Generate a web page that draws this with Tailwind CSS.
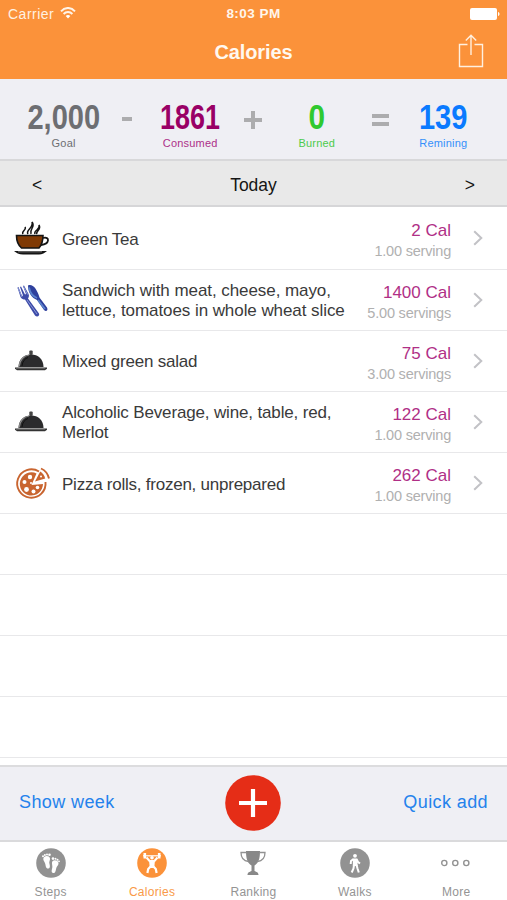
<!DOCTYPE html>
<html lang="en">
<head>
<meta charset="utf-8">
<title>Calories</title>
<script src="https://cdn.jsdelivr.net/npm/@tailwindcss/browser@4"></script>
</head>
<body class="w-[507px] h-[900px] overflow-hidden bg-white font-['Liberation_Sans',Arial,sans-serif] flex flex-col text-[#3a3a3a]">
<svg class="hidden">
  <symbol id="cloche" viewBox="0 0 34 24">
    <path d="M4.500 18C4.500 10 10 5.500 17 5.500S29.500 10 29.500 18Z" fill="#2b2b2d"/>
    <path d="M5.200 17.500C5.500 11 10 6.500 15 6" fill="none" stroke="#8b8b8b" stroke-width="1.200"/>
    <path d="M8 17C8.300 12.500 11 9.500 14 8.500" fill="none" stroke="#111" stroke-width="1"/>
    <rect x="15.300" y="1.500" width="3.400" height="4.500" rx="1" fill="#444"/>
    <path d="M1 18.500h32v1.300l-2 1.400H3l-2-1.400Z" fill="#333"/>
    <path d="M2 19h29" stroke="#999" stroke-width=".8"/>
  </symbol>
  <symbol id="chev" viewBox="0 0 10 16"><path d="M1.200 1.200 8.300 8l-7.100 6.800" fill="none" stroke="#c2c2c6" stroke-width="2"/></symbol>
</svg>

<header class="h-[79px] shrink-0 bg-[#fb923a] text-white flex flex-col">
  <div class="h-7 grid grid-cols-3 items-center px-2 text-[13px] leading-none">
    <div class="flex items-center gap-[6px] text-[#fff1e2]"><span class="text-[14px] tracking-[0.5px]">Carrier</span>
      <svg class="w-4 h-3 -mt-[3px]" viewBox="0 0 16 12" fill="none" stroke="#fff4e8" stroke-width="1.900"><path d="M1 4.300C5-.2 11-.2 15 4.300M3.600 7C6 4.300 10 4.300 12.400 7"/><path d="M8 11.500 5.700 9c1.300-1.300 3.300-1.300 4.600 0Z" fill="#fff" stroke="none"/></svg>
    </div>
    <div class="text-center font-bold text-[13.500px] tracking-[0.450px] text-[#fff6ec]">8:03 PM</div>
    <div class="flex justify-end"><svg class="w-[30px] h-3 -mr-px" viewBox="0 0 30 12" fill="#fff"><rect x="0" y="0" width="27" height="12" rx="2"/><path d="M28 4c2 .5 2 3.500 0 4Z"/></svg></div>
  </div>
  <div class="flex-1 grid grid-cols-3 items-center">
    <div></div>
    <h1 class="text-center text-[20px] font-bold leading-none tracking-[-0.1px] -mt-[3px] text-[#fff8ef]">Calories</h1>
    <div class="flex justify-end pr-[23px]"><svg class="w-[26px] h-9 -mt-[5px]" viewBox="0 0 26 36" fill="none" stroke="#fff0df" stroke-width="1.400"><path d="M9.500 11.500H1.500v22h23v-22h-8M13 22V2.500M7.800 7.500 13 2.200l5.200 5.300"/></svg></div>
  </div>
</header>

<section class="h-[82px] shrink-0 bg-[#efeff4] border-b-2 border-[#d8d8da] flex justify-center">
  <div class="w-[443px] grid grid-cols-7">
    <div class="flex flex-col items-center pt-5 text-[#6d6e72]"><b class="text-[35px] leading-[35px] scale-x-[0.83] whitespace-nowrap">2,000</b><span class="text-[11px] leading-[14px] mt-0.5 tracking-[0.2px]">Goal</span></div>
    <div class="flex justify-center pt-[38px]"><i class="w-[10px] h-1 bg-[#acacae]"></i></div>
    <div class="flex flex-col items-center pt-5 text-[#990066]"><b class="text-[35px] leading-[35px] scale-x-[0.770] whitespace-nowrap">1861</b><span class="text-[11px] leading-[14px] mt-0.5 tracking-[0.2px] text-[#ad3089]">Consumed</span></div>
    <div class="flex justify-center pt-8"><svg class="w-[18px] h-[18px]" viewBox="0 0 18 18"><path d="M0 9h18M9 0v18" stroke="#acacae" stroke-width="4"/></svg></div>
    <div class="flex flex-col items-center pt-5 text-[#2fc92f]"><b class="text-[35px] leading-[35px] scale-x-[0.85]">0</b><span class="text-[11px] leading-[14px] mt-0.5 tracking-[0.2px] text-[#4ccb4c]">Burned</span></div>
    <div class="flex flex-col items-center gap-1 pt-[35px]"><i class="w-[17px] h-1 bg-[#acacae]"></i><i class="w-[17px] h-1 bg-[#acacae]"></i></div>
    <div class="flex flex-col items-center pt-5 text-[#0a7aff]"><b class="text-[35px] leading-[35px] scale-x-[0.83]">139</b><span class="text-[11px] leading-[14px] mt-0.5 tracking-[0.2px] text-[#3590fb]">Remining</span></div>
  </div>
</section>

<nav class="h-[46px] shrink-0 bg-[#e9e9e9] border-b-2 border-[#d6d6d8] px-8 pt-[5px] grid grid-cols-3 items-center text-[17.500px] leading-none text-[#151515]">
  <span>&lt;</span><span class="text-center">Today</span><span class="text-right">&gt;</span>
</nav>

<main class="flex-1 min-h-0 overflow-hidden text-[17px] leading-[20.500px]">
  <div class="h-[62.500px] border-b border-[#e8e8ea] flex items-center pl-[14px] pr-6">
    <svg class="w-9 h-9 shrink-0" viewBox="0 0 36 36">
      <path d="M9 14c-2-3 4-4 2-7M14 14c-3-4 6-6 4-12 4 5-3 7-1 12M21 14c-2-4 6-4 4-9 3 5-4 6-2 9" fill="none" stroke="#151515" stroke-width="1.500"/>
      <path d="M29 18c7-2 7 6-2 7" fill="none" stroke="#151515" stroke-width="1.800"/>
      <path d="M2.500 15.500h26.500c0 6-1 9-4 12.500H7.500C4 25 2.500 21 2.500 15.500Z" fill="#803a05" stroke="#151515" stroke-width="1.600"/>
      <path d="M0 31h33c-2 2-5 3.300-8 3.600H9C5 34.300 2 33 0 31Z" fill="#151515"/><path d="M4 31.800h24" stroke="#999" stroke-width=".8"/>
    </svg>
    <div class="flex-1 pl-3 pt-[5px] tracking-[-0.3px]">Green Tea</div>
    <div class="text-right pt-[7px]"><div class="text-[#b02f86] leading-[21px]">2 Cal</div><div class="text-[14.500px] tracking-[-0.2px] text-[#b0b0b0] leading-[21px]">1.00 serving</div></div>
    <svg class="w-[10px] h-4 shrink-0 ml-[22px]"><use href="#chev"/></svg>
  </div>
  <div class="h-[61.100px] border-b border-[#e8e8ea] flex items-center pl-[14px] pr-6">
    <svg class="w-9 h-9 shrink-0" viewBox="0 0 36 36">
      <path d="M3.500 5.500 6.500 15c1 2 3 2.500 4.500 2.500l10 16c2 2 5 .5 4-2l-11-15c1.500-2 1-4 0-5.500L10 3.500l-1 .5 3 8-1 .5-4-8-1 .5 3 8.500-1 .5-3.500-9Z" fill="#3d4ba8"/>
      <path d="M4 6l4 9M9.500 4.500l4 8M13 18l10 14" stroke="#8997d6" stroke-width="1" fill="none"/>
      <path d="M14 3.500c5-2 9 4 11.500 12l7.500 10c1.500 3-1 4.500-3 2.500l-7-10c-5-2-9-7-9-14.500Z" fill="#2f409d"/>
      <path d="M15 5.500c1 5 4 9 8 10.500M24 18l7 9" stroke="#5b83cd" stroke-width="1.800" fill="none"/>
    </svg>
    <div class="flex-1 pl-3 pt-[3px] tracking-[-0.070px] whitespace-nowrap">Sandwich with meat, cheese, mayo,<br>lettuce, tomatoes in whole wheat slice</div>
    <div class="text-right pt-[7px] whitespace-nowrap"><div class="text-[#b02f86] leading-[21px]">1400 Cal</div><div class="text-[14.500px] tracking-[-0.2px] text-[#b0b0b0] leading-[21px]">5.00 servings</div></div>
    <svg class="w-[10px] h-4 shrink-0 ml-[22px]"><use href="#chev"/></svg>
  </div>
  <div class="h-[61.100px] border-b border-[#e8e8ea] flex items-center pl-[14px] pr-6">
    <svg class="w-[34px] h-6 mr-0.5 shrink-0"><use href="#cloche"/></svg>
    <div class="flex-1 pl-3 pt-1 tracking-[-0.220px]">Mixed green salad</div>
    <div class="text-right pt-[7px]"><div class="text-[#b02f86] leading-[21px]">75 Cal</div><div class="text-[14.500px] tracking-[-0.2px] text-[#b0b0b0] leading-[21px]">3.00 servings</div></div>
    <svg class="w-[10px] h-4 shrink-0 ml-[22px]"><use href="#chev"/></svg>
  </div>
  <div class="h-[61.100px] border-b border-[#e8e8ea] flex items-center pl-[14px] pr-6">
    <svg class="w-[34px] h-6 mr-0.5 shrink-0"><use href="#cloche"/></svg>
    <div class="flex-1 pl-3 pt-[3px] tracking-[-0.150px] whitespace-nowrap">Alcoholic Beverage, wine, table, red,<br>Merlot</div>
    <div class="text-right pt-[7px]"><div class="text-[#b02f86] leading-[21px]">122 Cal</div><div class="text-[14.500px] tracking-[-0.2px] text-[#b0b0b0] leading-[21px]">1.00 serving</div></div>
    <svg class="w-[10px] h-4 shrink-0 ml-[22px]"><use href="#chev"/></svg>
  </div>
  <div class="h-[61.100px] border-b border-[#e8e8ea] flex items-center pl-[14px] pr-6">
    <svg class="w-9 h-9 shrink-0" viewBox="0 0 36 36">
      <path d="M25 6.500A14.200 14.200 0 1 0 31.500 17" fill="none" stroke="#c96530" stroke-width="1.900"/>
      <path d="M22.500 8.500A11.600 11.600 0 1 0 29 19l-11.500 1Z" fill="#c96530"/>
      <path d="M21 16.500 26.200 6.500c2.500 1.500 4.300 4 5 7Z" fill="#c96530"/>
      <path d="M27 3.500c4.500 2 7 5.500 8 10" fill="none" stroke="#c96530" stroke-width="1.900"/>
      <g fill="#fff"><circle cx="16" cy="12" r="2.200"/><circle cx="10.500" cy="17" r="2"/><circle cx="12.500" cy="24.500" r="2.400"/><circle cx="19.500" cy="26.500" r="2"/><circle cx="23.500" cy="22.500" r="1.800"/><circle cx="17" cy="18" r="1"/><circle cx="27" cy="11.500" r="1"/></g>
    </svg>
    <div class="flex-1 pl-3 pt-1 tracking-[-0.240px]">Pizza rolls, frozen, unprepared</div>
    <div class="text-right pt-[7px]"><div class="text-[#b02f86] leading-[21px]">262 Cal</div><div class="text-[14.500px] tracking-[-0.2px] text-[#b0b0b0] leading-[21px]">1.00 serving</div></div>
    <svg class="w-[10px] h-4 shrink-0 ml-[22px]"><use href="#chev"/></svg>
  </div>
  <div class="h-[61.100px] border-b border-[#e8e8ea]"></div>
  <div class="h-[61.100px] border-b border-[#e8e8ea]"></div>
  <div class="h-[61.100px] border-b border-[#e8e8ea]"></div>
  <div class="h-[61.100px] border-b border-[#e8e8ea]"></div>
</main>

<section class="h-[75px] shrink-0 bg-[#efeff4] border-t-2 border-[#dcdcde] grid grid-cols-3 items-center px-[19px] text-[18px] leading-none text-[#2482ec]">
  <span class="tracking-[0.4px] -mt-[3px]">Show week</span>
  <svg class="w-14 h-14 justify-self-center -mt-px" viewBox="0 0 56 56"><circle cx="28" cy="28" r="27.800" fill="#e52d17"/><path d="M14 28h28M28 14v28" stroke="#fff" stroke-width="4.200"/></svg>
  <span class="text-right tracking-[0.4px] -mt-[3px]">Quick add</span>
</section>

<footer class="h-[60px] shrink-0 bg-white border-t-2 border-[#dadadc] grid grid-cols-5 text-[12px] leading-[14px] text-[#949494]">
  <div class="flex flex-col items-center pt-[6px]">
    <svg class="w-[30px] h-[30px]" viewBox="0 0 30 30"><circle cx="15" cy="15" r="14.800" fill="#929292"/>
      <g fill="#fff"><path d="M7.300 11c0-3.500 6-4 6.700-.5.300 2-1.200 3-.6 5 .5 2 1.100 4.500-.9 5-2.700.5-2.700-2.500-3.200-4.500C8.700 13.500 7.300 13 7.300 11Z"/><circle cx="7" cy="8.300" r="1"/><circle cx="8.900" cy="7" r="1"/><circle cx="11" cy="6.500" r="1"/><circle cx="13.500" cy="6.700" r="1.300"/>
      <path d="M16 14.500c.5-3.500 6.500-2.500 6.500 1 0 2-1.700 2.500-2.200 4.500s-.8 5.500-3 5c-2.700-.5-1.300-3.500-1-5.500.3-2-.5-3-.3-5Z"/><circle cx="17" cy="10.600" r="1.300"/><circle cx="19.500" cy="10.800" r="1"/><circle cx="21.500" cy="11.700" r="1"/><circle cx="23" cy="13.300" r=".9"/></g></svg>
    <span class="mt-[7px] tracking-[0.3px]">Steps</span>
  </div>
  <div class="flex flex-col items-center pt-[6px] text-[#f99a48]">
    <svg class="w-[30px] h-[30px]" viewBox="0 0 30 30"><circle cx="15" cy="15" r="14.800" fill="#fb923a"/>
      <g fill="none" stroke="#fff"><path d="M6 7.800h18" stroke-width="1.200"/><path d="M7.800 5v5.500M22.200 5v5.500" stroke-width="2.600"/><path d="M9.500 9.500l3.500 4M20.500 9.500l-3.500 4" stroke-width="2"/><path d="M14 18l-2.800 3-.8 4M16 18l2.800 3 .8 4" stroke-width="2.200"/></g><path d="M12 12h6l-.8 8h-4.400Z" fill="#fff"/><circle cx="15" cy="9.800" r="1.800" fill="#fff"/></svg>
    <span class="mt-[7px] tracking-[0.3px]">Calories</span>
  </div>
  <div class="flex flex-col items-center pt-[6px]">
    <svg class="w-[30px] h-[30px]" viewBox="0 0 30 30"><path d="M8 3h14c0 8-1.500 12-5.500 14.500V23c2 1 4 1.300 4 4h-11c0-2.700 2-3 4-4v-5.500C9.500 15 8 11 8 3Z" fill="#888"/><path d="M8.500 4.500H3c0 5 2 8.500 7.500 9M21.500 4.500H27c0 5-2 8.500-7.500 9" fill="none" stroke="#929292" stroke-width="1.300"/></svg>
    <span class="mt-[7px] tracking-[0.3px]">Ranking</span>
  </div>
  <div class="flex flex-col items-center pt-[6px]">
    <svg class="w-[30px] h-[30px]" viewBox="0 0 30 30"><circle cx="15" cy="15" r="14.800" fill="#929292"/><circle cx="15" cy="7.800" r="1.900" fill="#fff"/><path d="M13 10.500h4l.8 7.500h-5Z" fill="#fff"/><path d="M13.500 11l-2.500 2-.3 3M16.500 11l1.500 3 2 1.500M14 17l-.5 3.500L11.700 24.500M16.500 17l1 3.500 1.300 4" fill="none" stroke="#fff" stroke-width="2"/></svg>
    <span class="mt-[7px] tracking-[0.3px]">Walks</span>
  </div>
  <div class="flex flex-col items-center pt-[6px]">
    <svg class="w-[30px] h-[30px]" viewBox="0 0 30 30" fill="none" stroke="#929292" stroke-width="1.400"><circle cx="3.300" cy="15" r="2.600"/><circle cx="14.300" cy="15" r="2.600"/><circle cx="25.300" cy="15" r="2.600"/></svg>
    <span class="mt-[7px] tracking-[0.3px]">More</span>
  </div>
</footer>
</body>
</html>
